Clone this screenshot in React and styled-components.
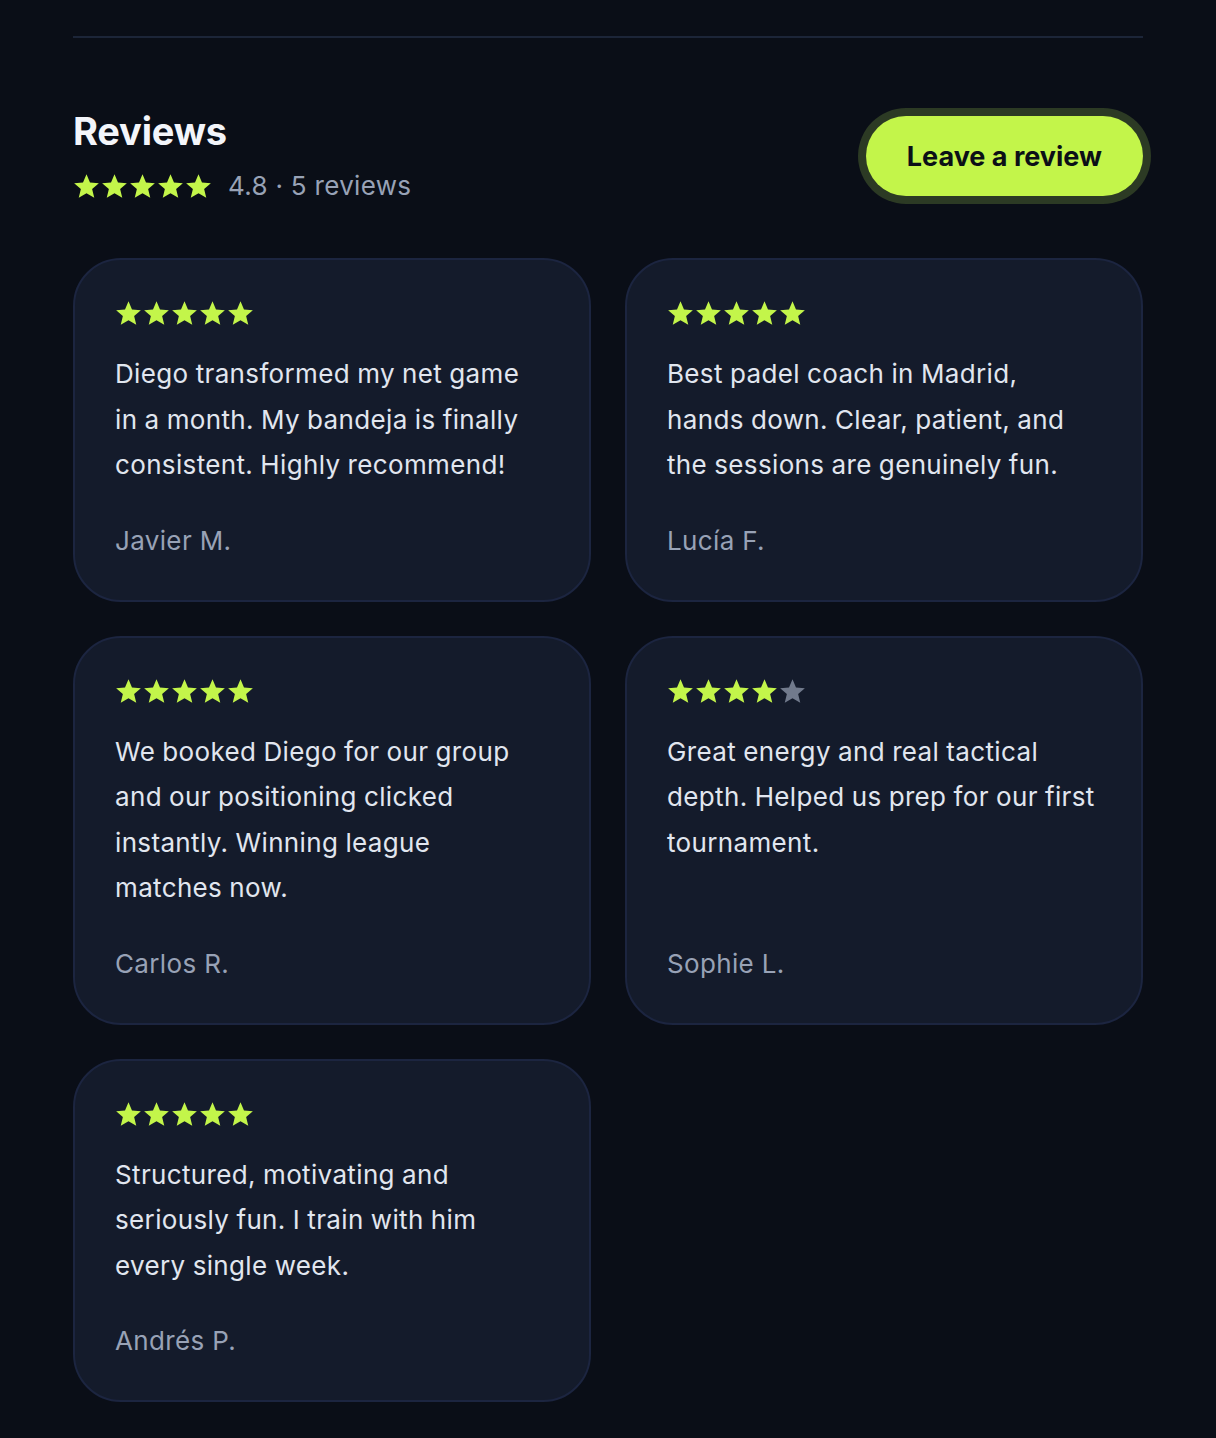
import React from "react";
import styled, { createGlobalStyle } from "styled-components";

const Global = createGlobalStyle`
  html, body { margin: 0; padding: 0; background: #0a0e17; }
  body { font-family: Inter, "Noto Sans", sans-serif; -webkit-font-smoothing: antialiased; }
`;

const Page = styled.div`
  min-height: 1438px;
  background: #0a0e17;
  padding: 36px 73px 0;
  box-sizing: border-box;
`;

const Divider = styled.hr`
  margin: 0;
  border: none;
  height: 2px;
  background: #1c2538;
`;

const Header = styled.div`
  display: flex;
  justify-content: space-between;
  align-items: center;
  margin-top: 70px;
`;

const TitleBlock = styled.div`
  display: flex;
  flex-direction: column;
  gap: 14px;
`;

const Title = styled.h2`
  margin: 0;
  font-size: 38px;
  line-height: 46px;
  font-weight: 700;
  color: #f3f5fa;
  letter-spacing: -0.2px;
`;

const RatingRow = styled.div`
  display: flex;
  align-items: center;
  gap: 16px;
`;

const RatingText = styled.span`
  font-size: 26px;
  line-height: 36px;
  color: #98a2b6;
  letter-spacing: 0.3px;
`;

const Button = styled.button`
  height: 80px;
  padding: 0 41px;
  border: none;
  border-radius: 40px;
  background: #c3f54a;
  color: #0b0f17;
  font-family: Inter, "Noto Sans", sans-serif;
  font-size: 27px;
  font-weight: 700;
  box-shadow: 0 0 0 8px #2c3a24;
  cursor: pointer;
`;

const Grid = styled.div`
  display: grid;
  grid-template-columns: 1fr 1fr;
  gap: 34px;
  margin-top: 54px;
`;

const Card = styled.div`
  background: #141b2b;
  border: 2px solid #1c2540;
  border-radius: 48px;
  padding: 40px 46px 39px 40px;
  display: flex;
  flex-direction: column;
  box-sizing: border-box;
`;

const StarsWrap = styled.div`
  display: flex;
  gap: 1px;
`;

const Quote = styled.p`
  margin: 24px 0 0;
  font-size: 26px;
  line-height: 45.5px;
  color: #e1e6ef;
  letter-spacing: 0.35px;
  word-spacing: -0.5px;
`;

const Author = styled.div`
  margin-top: auto;
  padding-top: 33px;
  font-size: 26px;
  line-height: 40px;
  color: #98a2b6;
  letter-spacing: 0.35px;
`;

const Star = ({ filled }) => (
  <svg width="27" height="27" viewBox="0 0 24 24">
    <path
      d="M12 1.2l3.1 7.3 7.9.6-6 5.2 1.9 7.7L12 17.9 5.1 22l1.9-7.7-6-5.2 7.9-.6z"
      fill={filled ? "#c3f54a" : "#717a8c"}
    />
  </svg>
);

const Stars = ({ n = 5 }) => (
  <StarsWrap>
    {[0, 1, 2, 3, 4].map((i) => (
      <Star key={i} filled={i < n} />
    ))}
  </StarsWrap>
);

const reviews = [
  { n: 5, text: "Diego transformed my net game in a month. My bandeja is finally consistent. Highly recommend!", author: "Javier M." },
  { n: 5, text: "Best padel coach in Madrid, hands down. Clear, patient, and the sessions are genuinely fun.", author: "Lucía F." },
  { n: 5, text: "We booked Diego for our group and our positioning clicked instantly. Winning league matches now.", author: "Carlos R." },
  { n: 4, text: "Great energy and real tactical depth. Helped us prep for our first tournament.", author: "Sophie L." },
  { n: 5, text: "Structured, motivating and seriously fun. I train with him every single week.", author: "Andrés P." },
];

export default function App() {
  return (
    <>
      <Global />
      <Page>
        <Divider />
        <Header>
          <TitleBlock>
            <Title>Reviews</Title>
            <RatingRow>
              <Stars n={5} />
              <RatingText>4.8 · 5 reviews</RatingText>
            </RatingRow>
          </TitleBlock>
          <Button>Leave a review</Button>
        </Header>
        <Grid>
          {reviews.map((r) => (
            <Card key={r.author}>
              <Stars n={r.n} />
              <Quote>{r.text}</Quote>
              <Author>{r.author}</Author>
            </Card>
          ))}
        </Grid>
      </Page>
    </>
  );
}
